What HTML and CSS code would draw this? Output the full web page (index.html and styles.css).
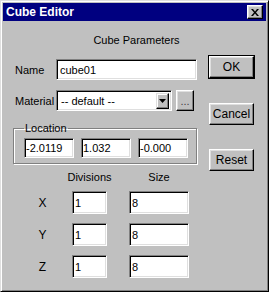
FILE: index.html
```html
<!DOCTYPE html>
<html>
  <head>
    <title>Cube Editor</title>
    <link rel="stylesheet" href="styles.css">
  </head>
  <body>
    <div class="window">
      <div class="titlebar">
        <span class="title">Cube Editor</span>
        <button class="close">
          <svg width="8" height="7" viewBox="0 0 8 7">
            <path d="M0 0h2l2 2.5L6 0h2L5 3.5 8 7H6L4 4.5 2 7H0l3-3.5z" fill="#000"/>
          </svg>
        </button>
      </div>

      <div class="content">
        <div class="heading">Cube Parameters</div>

        <div class="main">
          <div class="fields">
            <div class="row">
              <label class="label">Name</label>
              <input class="field name-field" value="cube01">
            </div>

            <div class="row material-row">
              <label class="label">Material</label>
              <div class="field select">
                <span>-- default --</span>
                <span class="drop">
                  <svg width="7" height="4" viewBox="0 0 7 4"><path d="M0 0h7L3.5 4z" fill="#000"/></svg>
                </span>
              </div>
              <button class="btn browse">...</button>
            </div>

            <fieldset class="group">
              <legend>Location</legend>
              <div class="coords">
                <input class="field coord" value="-2.0119">
                <input class="field coord" value="1.032">
                <input class="field coord" value="-0.000">
              </div>
            </fieldset>

            <div class="grid">
              <span></span>
              <span class="col-head">Divisions</span>
              <span></span>
              <span class="col-head">Size</span>

              <span class="axis">X</span>
              <input class="field cell" value="1">
              <span></span>
              <input class="field cell" value="8">

              <span class="axis">Y</span>
              <input class="field cell" value="1">
              <span></span>
              <input class="field cell" value="8">

              <span class="axis">Z</span>
              <input class="field cell" value="1">
              <span></span>
              <input class="field cell" value="8">
            </div>
          </div>

          <div class="buttons">
            <button class="btn default">OK</button>
            <button class="btn cancel">Cancel</button>
            <button class="btn reset">Reset</button>
          </div>
        </div>
      </div>
    </div>
  </body>
</html>
```

FILE: styles.css
```css
body {
  margin: 0;
  background-color: #c0c0c0;
  font-family: "Liberation Sans", Arial, sans-serif;
  font-size: 11px;
  color: #000;
}

.window {
  width: 269px;
  height: 292px;
  box-sizing: border-box;
  background-color: #c0c0c0;
  border: 1px solid;
  border-color: #dfdfdf #000 #000 #dfdfdf;
  box-shadow: inset 1px 1px #fff, inset -1px -1px #808080;
  padding: 2px;
}

.titlebar {
  height: 18px;
  background-color: #000080;
  color: #fff;
  display: flex;
  align-items: center;
  justify-content: space-between;
  padding: 0 3px 0 3px;
}

.title {
  font-weight: bold;
  font-size: 12px;
}

.close {
  width: 16px;
  height: 14px;
  padding: 0;
  background-color: #c0c0c0;
  border: 1px solid;
  border-color: #fff #000 #000 #fff;
  box-shadow: inset -1px -1px #808080, inset 1px 1px #dfdfdf;
  display: flex;
  align-items: center;
  justify-content: center;
}

.content {
  padding-left: 10px;
}

.heading {
  text-align: center;
  padding-top: 12px;
  line-height: 14px;
  margin-bottom: 9px;
  padding-right: 6px;
}

.main {
  display: flex;
}

.fields {
  width: 184px;
  padding-top: 3px;
}

.row {
  display: flex;
  align-items: center;
  height: 21px;
}

.label {
  width: 41px;
  padding-left: 2px;
}

.field {
  font: inherit;
  color: #000;
  background-color: #fff;
  box-sizing: border-box;
  border: 1px solid;
  border-color: #808080 #fff #fff #808080;
  box-shadow: inset 1px 1px #000, inset -1px -1px #dfdfdf;
  padding: 0 0 0 2px;
  margin: 0;
  outline: none;
}

.name-field {
  width: 141px;
  height: 21px;
  padding-left: 3px;
}

.material-row {
  margin-top: 10px;
}

.select {
  width: 116px;
  height: 21px;
  display: flex;
  align-items: center;
  justify-content: space-between;
  padding: 2px 2px 2px 4px;
}

.drop {
  width: 13px;
  height: 16px;
  box-sizing: border-box;
  background-color: #c0c0c0;
  border: 1px solid;
  border-color: #dfdfdf #000 #000 #dfdfdf;
  box-shadow: inset -1px -1px #808080, inset 1px 1px #fff;
  display: flex;
  align-items: center;
  justify-content: center;
}

.btn {
  font: inherit;
  font-size: 12px;
  color: #000;
  background-color: #c0c0c0;
  border: 1px solid;
  border-color: #fff #000 #000 #fff;
  box-shadow: inset -1px -1px #808080, inset 1px 1px #dfdfdf;
  padding: 0;
}

.browse {
  width: 18px;
  height: 21px;
  margin-left: 4px;
  font-size: 11px;
  color: #404040;
}

.group {
  margin: 11px 0 0 0;
  padding: 3px 0 5px 10px;
  border: 1px solid #808080;
  box-shadow: inset 1px 1px #fff, 1px 1px #fff;
}

.group legend {
  padding: 0 1px;
  margin-left: 0;
  line-height: 13px;
}

.coords {
  display: flex;
  gap: 7px;
}

.coord {
  width: 50px;
  height: 20px;
  padding-left: 1px;
}

.grid {
  display: grid;
  grid-template-columns: 59px 35px 22px 60px;
  grid-template-rows: 9px 23px 23px 23px;
  row-gap: 9px;
  margin-top: 9px;
  align-items: center;
}

.col-head {
  text-align: center;
  white-space: nowrap;
  line-height: 13px;
}

.col-head:nth-child(2) {
  margin: 0 -10px;
}

.axis {
  text-align: center;
  font-size: 12px;
}

.cell {
  width: 100%;
  height: 23px;
  padding-left: 2px;
}

.buttons {
  display: flex;
  flex-direction: column;
  margin-left: 12px;
}

.buttons .btn {
  width: 45px;
  height: 22px;
}

.default {
  box-shadow: 0 0 0 1px #000, inset -1px -1px #808080, inset 1px 1px #dfdfdf;
}

.cancel {
  margin-top: 25px;
}

.reset {
  margin-top: 24px;
}
```
